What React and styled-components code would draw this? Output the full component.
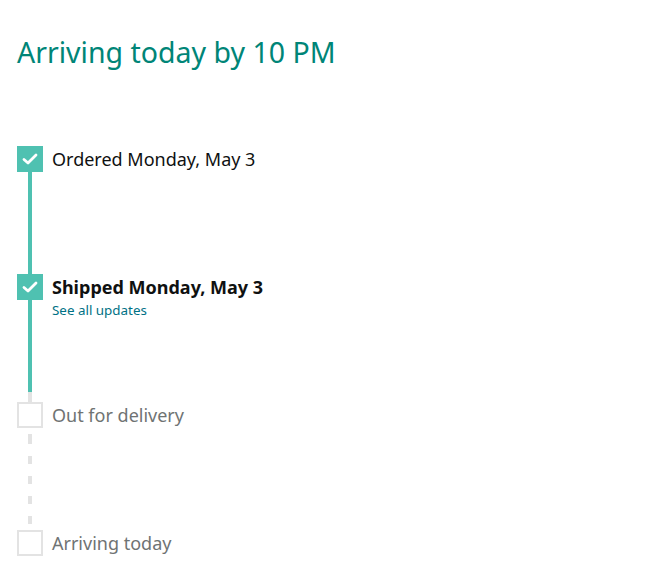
import React from "react";
import styled, { createGlobalStyle } from "styled-components";

const teal = "#4fc1b1";
const grey = "#e3e3e3";

const GlobalStyle = createGlobalStyle`
    body {
        margin: 0;
        background: #fff;
        font-family: "Noto Sans", "Open Sans", Arial, sans-serif;
    }
`;

const Page = styled.div`
    display: flex;
    flex-flow: column;
    padding: 0 17px;
`;

const Title = styled.h1`
    margin: 0;
    padding-top: 34px;
    height: 146px;
    box-sizing: border-box;
    font-size: 28.5px;
    font-weight: 400;
    line-height: 36px;
    color: #008577;
`;

const Tracker = styled.ol`
    list-style: none;
    margin: 0;
    padding: 0;
`;

const Step = styled.li`
    display: grid;
    grid-template-columns: 26px 1fr;
    column-gap: 9px;
`;

const Rail = styled.div`
    display: flex;
    flex-flow: column;
    align-items: center;
`;

const Box = styled.div`
    display: flex;
    justify-content: center;
    align-items: center;
    width: 26px;
    height: 26px;
    box-sizing: border-box;
    background: ${p => (p.$done ? teal : "#fff")};
    border: ${p => (p.$done ? "none" : `2px solid ${grey}`)};
`;

const Connector = styled.div`
    width: 4px;
    height: 102px;
    background: ${p =>
        p.$kind === "done"
            ? teal
            : p.$kind === "partial"
            ? `linear-gradient(${teal} 0 92px, ${grey} 92px)`
            : `repeating-linear-gradient(${grey} 0 8px, transparent 8px 20px)`};
    background-position: ${p => (p.$kind === "todo" ? "0 8px" : "0 0")};
`;

const Label = styled.div`
    font-size: 18px;
    line-height: 26px;
    font-weight: ${p => (p.$bold ? 700 : 400)};
    color: ${p => (p.$done ? "#0f1111" : "#6f7373")};
`;

const UpdatesLink = styled.a`
    display: block;
    font-size: 13.4px;
    line-height: 20px;
    color: #007185;
    text-decoration: none;
`;

const Check = () => (
    <svg width="18" height="18" viewBox="0 0 18 18">
        <path d="M3 9.5 L7 13 L15 5" fill="none" stroke="#fff" strokeWidth="2.8" strokeLinecap="round" strokeLinejoin="round" />
    </svg>
);

const steps = [
    { label: "Ordered Monday, May 3", done: true, connector: "done" },
    { label: "Shipped Monday, May 3", done: true, bold: true, link: "See all updates", connector: "partial" },
    { label: "Out for delivery", done: false, connector: "todo" },
    { label: "Arriving today", done: false },
];

export default function App() {
    return (
        <Page>
            <GlobalStyle />
            <Title>Arriving today by 10 PM</Title>
            <Tracker>
                {steps.map(step => (
                    <Step key={step.label}>
                        <Rail>
                            <Box $done={step.done}>{step.done && <Check />}</Box>
                            {step.connector && <Connector $kind={step.connector} />}
                        </Rail>
                        <div>
                            <Label $done={step.done} $bold={step.bold}>{step.label}</Label>
                            {step.link && <UpdatesLink href="#">{step.link}</UpdatesLink>}
                        </div>
                    </Step>
                ))}
            </Tracker>
        </Page>
    );
}
